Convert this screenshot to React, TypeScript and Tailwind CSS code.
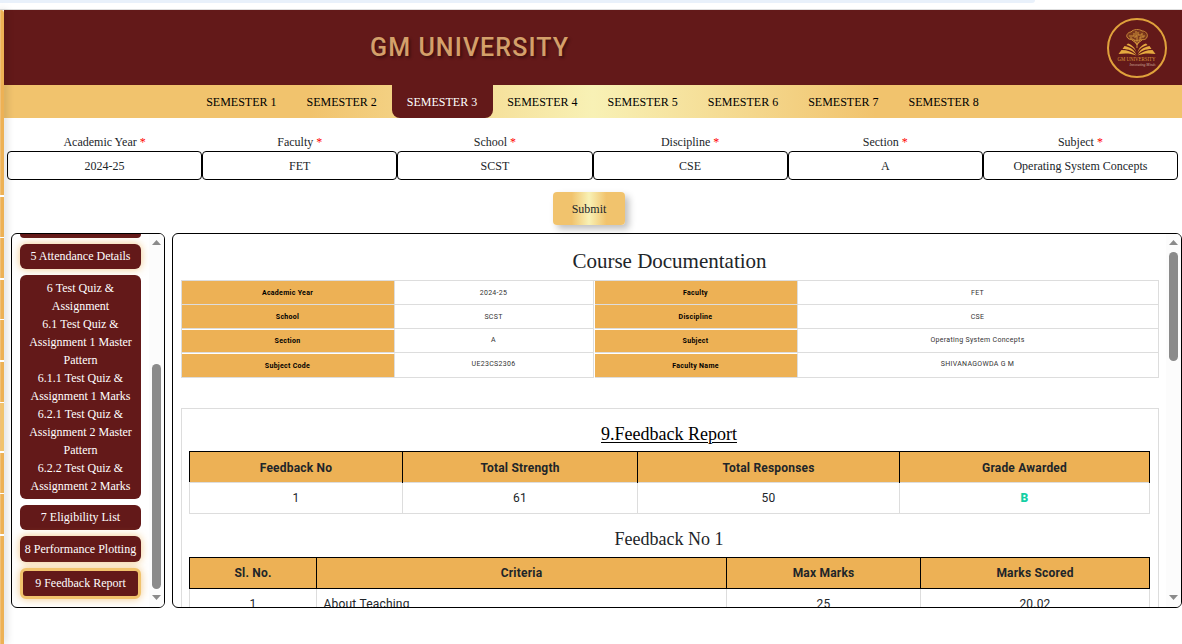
import type { ReactNode } from "react";

const semesters = [1, 2, 3, 4, 5, 6, 7, 8];

const filters = [
  { label: "Academic Year", value: "2024-25" },
  { label: "Faculty", value: "FET" },
  { label: "School", value: "SCST" },
  { label: "Discipline", value: "CSE" },
  { label: "Section", value: "A" },
  { label: "Subject", value: "Operating System Concepts" },
];

const quizLines = [
  "6 Test Quiz &",
  "Assignment",
  "6.1 Test Quiz &",
  "Assignment 1 Master",
  "Pattern",
  "6.1.1 Test Quiz &",
  "Assignment 1 Marks",
  "6.2.1 Test Quiz &",
  "Assignment 2 Master",
  "Pattern",
  "6.2.2 Test Quiz &",
  "Assignment 2 Marks",
];

const details = [
  ["Academic Year", "2024-25", "Faculty", "FET"],
  ["School", "SCST", "Discipline", "CSE"],
  ["Section", "A", "Subject", "Operating System Concepts"],
  ["Subject Code", "UE23CS2306", "Faculty Name", "SHIVANAGOWDA G M"],
];

const GOLD_GRADIENT =
  "bg-[linear-gradient(90deg,#f1c36d_0%,#f1c36d_26%,#f8f1b5_50%,#f1c36d_74%,#f1c36d_100%)]";

function Logo() {
  return (
    <svg width="60" height="60" viewBox="0 0 60 60">
      <circle cx="30" cy="30" r="29" fill="none" stroke="#e0a23c" strokeWidth="2" />
      <ellipse cx="30" cy="18" rx="9.500" ry="5.500" fill="#7d3a1c" />
      <g fill="none" stroke="#d0913a" strokeWidth="1">
        <path d="M20 19c-1-3 2-5 4-5 2-3 9-3 11-1 4 0 6 3 5 6-1 3-4 3-6 2-3 2-6 2-8 0-3 1-5 0-6-2z" />
        <path d="M22 18h5v-3M24 21v-2M29 13v6h-2M31 14v3h4v-2M33 21v-2h4M35 18h3" />
        <path d="M30 17v13M25 22l5 4 5-4M27 22l3 5 3-5" />
      </g>
      <g fill="#e5a93f">
        <path d="M29.500 37c-3-4-8-6-14-6l2-3c6 1 10 4 12 9z" />
        <path d="M30.500 37c3-4 8-6 14-6l-2-3c-6 1-10 4-12 9z" />
        <path d="M29.500 34.500c-2-4-5-6-10-7.500l1.500-1.500c4 1.500 7 4 8.500 9z" />
        <path d="M30.500 34.500c2-4 5-6 10-7.500l-1.500-1.500c-4 1.500-7 4-8.500 9z" />
        <path d="M11.500 36l3-4c6 0 11 2 15 5.500-6-2.500-12-2.500-18-1.500z" />
        <path d="M48.500 36l-3-4c-6 0-11 2-15 5.500 6-2.500 12-2.500 18-1.500z" />
      </g>
      <text x="29.500" y="42.500" textAnchor="middle" textLength="38" lengthAdjust="spacingAndGlyphs" fontSize="5.500" fontFamily="Liberation Serif, serif" fill="#d9963a">
        GM UNIVERSITY
      </text>
      <text x="22.500" y="47.500" textLength="26" lengthAdjust="spacingAndGlyphs" fontSize="4.500" fontStyle="italic" fontFamily="Liberation Serif, serif" fill="#cfae9a">
        Innovating Minds
      </text>
    </svg>
  );
}

function MenuStrip() {
  const heights = [
    "h-[185px]", "h-[40px]", "h-[40px]", "h-[39px]", "h-[40px]", "h-[40px]",
    "h-[48px]", "h-[40px]", "h-[40px]", "h-[108px]",
  ];
  return (
    <div className="relative z-10 flex h-[634px] w-1 shrink-0 flex-col gap-[1.500px] rounded-tr-[3px] bg-white shadow-[1px_0_9px_rgba(0,0,0,0.25)]">
      {heights.map((h, i) => (
        <div
          key={i}
          className={`${h} w-1 shrink-0 border-l border-[#f0c078] ${i === 6 ? "bg-[#f1c36d]" : "bg-[#edb155]"} ${i === 0 ? "rounded-tr-[3px]" : ""}`}
        />
      ))}
    </div>
  );
}

function Scrollbar({ before, thumb }: { before: string; thumb: string }) {
  return (
    <div className="flex w-[15px] shrink-0 flex-col items-center bg-[#fcfcfc]">
      <svg className="mt-[6px] shrink-0" width="9" height="5" viewBox="0 0 9 5">
        <path d="M4.500 0L9 5H0z" fill="#8b8b8b" />
      </svg>
      <div className={`shrink-0 ${before}`} />
      <div className={`w-[9px] shrink-0 rounded-full bg-[#8b8b8b] ${thumb}`} />
      <svg className="mb-[7px] mt-auto shrink-0" width="9" height="5" viewBox="0 0 9 5">
        <path d="M0 0h9L4.500 5z" fill="#8b8b8b" />
      </svg>
    </div>
  );
}

function Item({ children, className }: { children: ReactNode; className: string }) {
  return (
    <div className={`flex w-[121px] shrink-0 flex-col items-center justify-center whitespace-nowrap bg-[#631919] text-xs leading-[18px] text-white ${className}`}>
      {children}
    </div>
  );
}

function Sidebar() {
  return (
    <aside className="flex h-[375px] w-[154px] overflow-hidden rounded-[6px] border border-black">
      <div className="flex min-w-0 grow flex-col pl-2">
        <Item className="h-[4px] rounded-b-[6px]">{null}</Item>
        <Item className="mt-[6px] h-[25px] rounded-[6px] pb-[2px] shadow-[0_0_8px_rgba(237,177,85,0.7)]">5 Attendance Details</Item>
        <Item className="mt-[6px] h-[224px] rounded-[6px]">
          {quizLines.map((line, i) => (
            <span key={i}>{line}</span>
          ))}
        </Item>
        <Item className="mt-[6px] h-[25px] rounded-[6px] pb-[2px]">7 Eligibility List</Item>
        <Item className="mt-[6px] h-[26px] rounded-[6px] shadow-[0_0_8px_rgba(237,177,85,0.7)]">8 Performance Plotting</Item>
        <Item className="mt-[6px] h-[31px] rounded-[6px] border-[3px] border-[#f1c36d] pb-[2px] shadow-[0_0_8px_rgba(237,177,85,0.7)]">
          9 Feedback Report
        </Item>
      </div>
      <Scrollbar before="h-[119px]" thumb="h-[225px]" />
    </aside>
  );
}

function DetailsTable() {
  return (
    <div className="mx-auto w-[978px] shrink-0 border-l border-t border-[#ddd] font-['Roboto',sans-serif] text-[7px] tracking-[0.3px] text-[#333]">
      {details.map((row, i) => (
        <div
          key={row[0]}
          className={`grid grid-cols-[213px_200px_203px_361px] text-center ${i === 3 ? "h-[25px]" : "h-6"}`}
        >
          {row.map((cell, c) =>
            c % 2 === 0 ? (
              <div
                key={c}
                className={`flex items-center justify-center border-b border-r border-[#ddd] bg-[#edb155] pt-[2px] font-bold tracking-[0.3px] text-black ${i > 1 ? "border-t border-t-white" : ""}`}
              >
                {cell}
              </div>
            ) : (
              <div
                key={c}
                className={`flex items-center justify-center border-b border-r border-[#ddd] ${c === 1 ? "mr-px" : ""} ${i < 2 ? "pt-[2px]" : ""}`}
              >
                {cell}
              </div>
            )
          )}
        </div>
      ))}
    </div>
  );
}

function HeadCell({ children }: { children: ReactNode }) {
  return <div className="flex items-center justify-center border-r border-black pl-px">{children}</div>;
}

function Cell({ children, className = "justify-center pl-px" }: { children: ReactNode; className?: string }) {
  return <div className={`flex items-center border-r border-[#ddd] ${className}`}>{children}</div>;
}

function Content() {
  return (
    <section className="ml-[7px] flex h-[375px] w-[1010px] overflow-hidden rounded-[6px] border border-black">
      <div className="flex grow flex-col">
        <h1 className="mt-[12px] h-[34px] shrink-0 text-center text-[21px] leading-[31px] text-[#212529]">Course Documentation</h1>
        <DetailsTable />
        <div className="mx-auto mt-[30px] flex w-[978px] shrink-0 flex-col border border-b-0 border-[#ddd] pb-10 pl-[7px] pr-2">
          <h2 className="mt-[11px] h-[31px] text-center text-lg leading-[29px] text-black underline decoration-1 underline-offset-2">
            9.Feedback Report
          </h2>
          <div className="font-['Roboto',sans-serif] text-xs text-[#212529]">
            <div className="grid h-8 grid-cols-[213px_235px_262px_250px] border-l border-t border-black bg-[#edb155] font-bold tracking-[0.2px]">
              <HeadCell>Feedback No</HeadCell>
              <HeadCell>Total Strength</HeadCell>
              <HeadCell>Total Responses</HeadCell>
              <HeadCell>Grade Awarded</HeadCell>
            </div>
            <div className="-mt-px grid h-8 grid-cols-[213px_235px_262px_250px] border-y border-l border-[#ddd] tracking-[0.3px]">
              <Cell>1</Cell>
              <Cell>61</Cell>
              <Cell>50</Cell>
              <Cell className="justify-center pl-px font-black text-[#14cfa4]">B</Cell>
            </div>
          </div>
          <h3 className="h-[43px] pt-[11px] text-center text-lg leading-[29px] text-[#212529]">Feedback No 1</h3>
          <div className="font-['Roboto',sans-serif] text-xs text-[#212529]">
            <div className="grid h-8 grid-cols-[127px_410px_194px_229px] border-y border-l border-black bg-[#edb155] font-bold tracking-[0.2px]">
              <HeadCell>Sl. No.</HeadCell>
              <HeadCell>Criteria</HeadCell>
              <HeadCell>Max Marks</HeadCell>
              <HeadCell>Marks Scored</HeadCell>
            </div>
            <div className="grid h-[31px] grid-cols-[127px_410px_194px_229px] border-b border-l border-[#ddd] tracking-[0.2px]">
              <Cell>1</Cell>
              <Cell className="pl-[7px]">About Teaching</Cell>
              <Cell>25</Cell>
              <Cell>20.02</Cell>
            </div>
          </div>
        </div>
      </div>
      <Scrollbar before="h-[7px]" thumb="h-[109px]" />
    </section>
  );
}

export default function App() {
  return (
    <div className="h-[644px] w-[1182px] overflow-hidden bg-white font-['Liberation_Serif',serif] text-xs text-[#212529]">
      <div className="h-[3px] w-[1035px] rounded-br-[3px] bg-[#e9f1fb]" />
      <div className="h-[7px] border-b border-[#dedede]" />
      <div className="flex">
        <MenuStrip />
        <main className="flex w-[1178px] flex-col">
          <header className="flex h-[75px] items-center justify-between bg-[#631919] pl-[366px] pr-[15px]">
            <div className="pt-px font-['Roboto',sans-serif] text-[25px] font-medium tracking-[1.1px] text-[#d4a06a] [text-shadow:2px_2px_3px_rgba(0,0,0,0.4)]">
              GM UNIVERSITY
            </div>
            <Logo />
          </header>
          <nav className={`flex h-[33px] justify-center text-black ${GOLD_GRADIENT}`}>
            {semesters.map((n) => (
              <div
                key={n}
                className={`flex w-[100.330px] items-center justify-center whitespace-nowrap pr-px ${n === 3 ? "rounded-b-[8px] bg-[#631919] text-white" : ""}`}
              >
                SEMESTER {n}
              </div>
            ))}
          </nav>
          <div className="grid h-[62px] grid-cols-6 pl-[3px] pr-1 pt-[15px] text-center">
            {filters.map((f) => (
              <label key={f.label} className="flex flex-col">
                <span className="h-[18px] leading-[18px]">
                  {f.label} <span className="text-[#ff0000]">*</span>
                </span>
                <span className="flex h-[29px] items-center justify-center rounded-[4px] border border-black">{f.value}</span>
              </label>
            ))}
          </div>
          <div className="flex h-[53px] pl-[549px] pt-3">
            <button className={`h-[33px] w-[72px] rounded-[4px] shadow-[4px_4px_7px_rgba(0,0,0,0.25)] ${GOLD_GRADIENT}`}>
              Submit
            </button>
          </div>
          <div className="flex pl-[7px]">
            <Sidebar />
            <Content />
          </div>
        </main>
      </div>
    </div>
  );
}
